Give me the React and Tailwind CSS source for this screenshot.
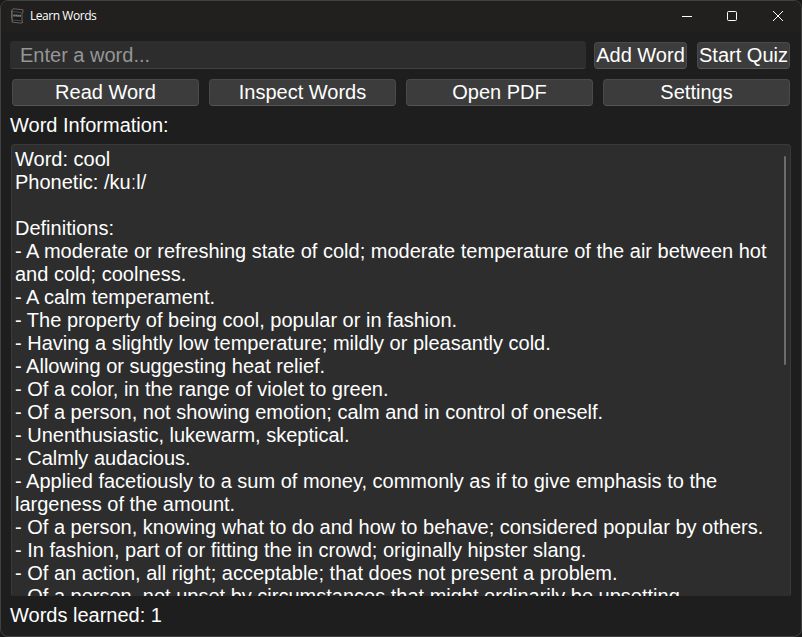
const lines = [
  'Word: cool',
  'Phonetic: /kuːl/',
  '',
  'Definitions:',
  '- A moderate or refreshing state of cold; moderate temperature of the air between hot',
  'and cold; coolness.',
  '- A calm temperament.',
  '- The property of being cool, popular or in fashion.',
  '- Having a slightly low temperature; mildly or pleasantly cold.',
  '- Allowing or suggesting heat relief.',
  '- Of a color, in the range of violet to green.',
  '- Of a person, not showing emotion; calm and in control of oneself.',
  '- Unenthusiastic, lukewarm, skeptical.',
  '- Calmly audacious.',
  '- Applied facetiously to a sum of money, commonly as if to give emphasis to the',
  'largeness of the amount.',
  '- Of a person, knowing what to do and how to behave; considered popular by others.',
  '- In fashion, part of or fitting the in crowd; originally hipster slang.',
  '- Of an action, all right; acceptable; that does not present a problem.',
  '- Of a person, not upset by circumstances that might ordinarily be upsetting.',
];

function Button({ children, className }) {
  return (
    <button
      className={`flex h-[27px] items-center justify-center whitespace-nowrap rounded-[4px] border border-[#4a4a4a] border-b-[#555555] bg-[#3c3c3c] leading-[23px] ${className}`}
    >
      {children}
    </button>
  );
}

function TitleBar() {
  return (
    <header className="flex h-[31px] shrink-0 items-center bg-[#21201e] pb-[2px] pl-[9px]">
      <svg width="15" height="16" viewBox="0 0 15 16" fill="none" className="mr-[5px]">
        <path d="M1.5 2.5 3 .8l10 1v2.5L12 5v8.5l1 .8-2 .8-9-1V11L1.5 10z" fill="#191919" stroke="#777" strokeWidth=".8" />
        <path d="M2 3.5 11.5 4.5M2 12l9.5.8M2.5 2v11" stroke="#555" strokeWidth=".8" />
        <path d="M3.5 7.5h1.2M5.5 7.5h1.2M7.5 7.8h1.2M9.5 7.8h1.2" stroke="#aaa" strokeWidth="2" />
      </svg>
      <span className="font-['Open_Sans','Noto_Sans',sans-serif] text-[12px] leading-4 tracking-[-0.45px]">
        Learn Words
      </span>
      <div className="ml-auto mr-[18px] flex items-center">
        <svg width="10" height="10" viewBox="0 0 10 10" className="mr-[35px]"><path d="M0 5.5h10" stroke="#fff" /></svg>
        <svg width="10" height="10" viewBox="0 0 10 10" className="mr-[36px]"><rect x=".5" y=".5" width="9" height="9" rx="1" fill="none" stroke="#fff" /></svg>
        <svg width="10" height="10" viewBox="0 0 10 10"><path d="m0 0 10 10M10 0 0 10" stroke="#fff" /></svg>
      </div>
    </header>
  );
}

export default function App() {
  return (
    <div className="h-[637px] w-[802px] bg-[#1a1a1a]">
      <div className="flex h-full flex-col overflow-hidden rounded-[8px] border border-[#414141] bg-[#1e1e1e] font-['Liberation_Sans',Arial,sans-serif] text-[20px] text-white">
        <TitleBar />
        <main className="flex flex-col pl-[9px] pr-[10px] pt-[9px]">
          <div className="flex items-center pr-px">
            <input
              placeholder="Enter a word..."
              className="h-[28px] w-[576px] rounded-[3px] border-b border-[#404040] bg-[#2d2d2d] px-[10px] pt-[2px] leading-[23px] outline-none placeholder:text-[#969696] placeholder:opacity-100"
            />
            <Button className="ml-2 mt-px w-[93px]">Add Word</Button>
            <Button className="ml-[10px] mt-px w-[93px]">Start Quiz</Button>
          </div>
          <div className="mt-[10px] flex gap-[10px] pl-[2px]">
            <Button className="w-[187px]">Read Word</Button>
            <Button className="w-[187px]">Inspect Words</Button>
            <Button className="w-[187px]">Open PDF</Button>
            <Button className="w-[187px]">Settings</Button>
          </div>
          <div className="mt-[8px] h-[23px] leading-[23px]">Word Information:</div>
          <div className="ml-px mt-[7px] flex h-[452px] w-[780px] justify-between overflow-hidden rounded-[4px] rounded-b-[2px] border border-b-0 border-[#3a3a3a] bg-[#2d2d2d] pl-[3px] pr-[4px] pt-[3px]">
            <div>
              {lines.map((line, i) => (
                <div key={i} className="h-[23px] whitespace-pre leading-[23px]">{line}</div>
              ))}
            </div>
            <div className="mt-[8px] h-[209px] w-[2px] rounded-full bg-[#6b6b6b]" />
          </div>
          <div className="mt-[8px] h-[23px] leading-[23px]">Words learned: 1</div>
        </main>
      </div>
    </div>
  );
}
